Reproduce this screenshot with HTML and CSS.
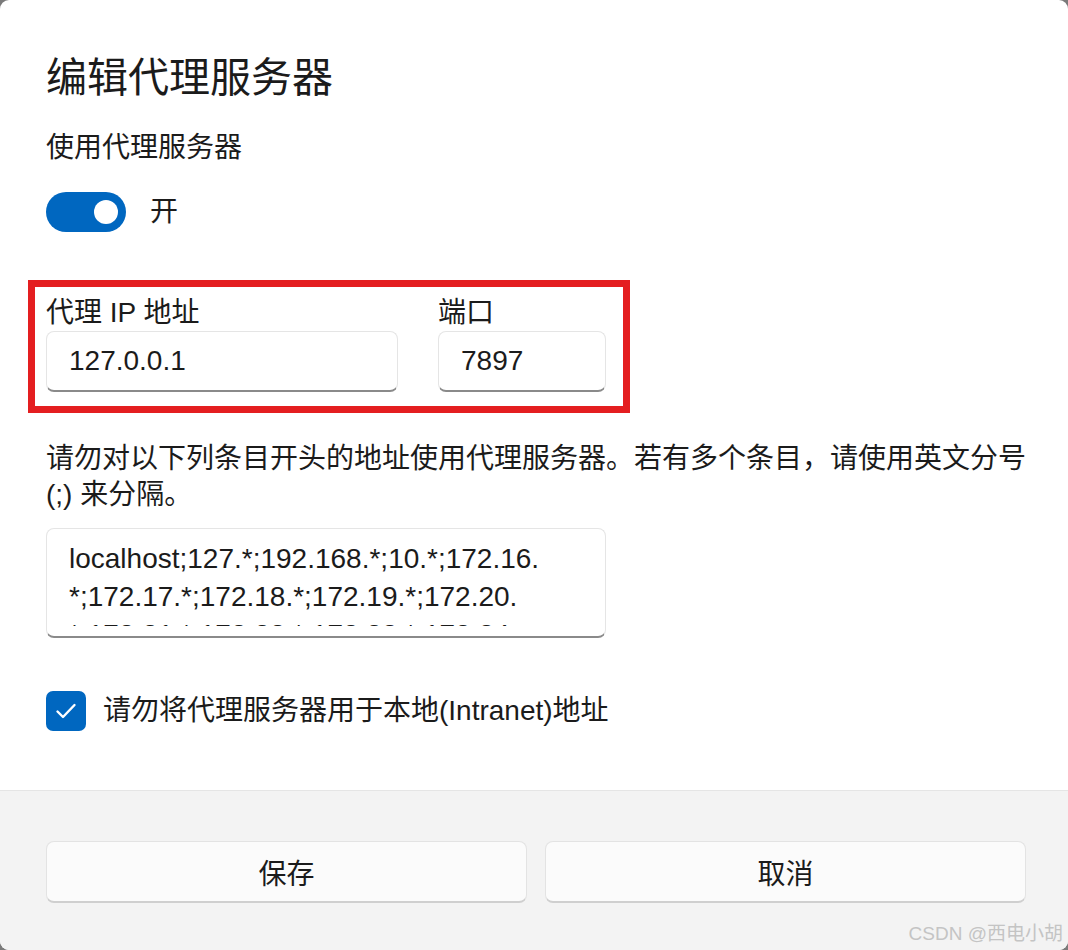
FILE: index.html
```html
<!DOCTYPE html>
<html lang="zh-CN">
<head>
    <meta charset="UTF-8">
    <meta name="viewport" content="width=device-width, initial-scale=1.0">
    <title>编辑代理服务器</title>
    <link rel="stylesheet" href="styles.css">
</head>
<body>
    <div class="dialog">
        <div class="content">
            <h1 class="title">编辑代理服务器</h1>
            <div class="subtitle">使用代理服务器</div>
            <div class="toggle-row">
                <div class="toggle"><div class="knob"></div></div>
                <span>开</span>
            </div>

            <div class="mark">
                <div class="field ip">
                    <div class="label">代理 IP 地址</div>
                    <div class="input">127.0.0.1</div>
                </div>
                <div class="field port">
                    <div class="label">端口</div>
                    <div class="input">7897</div>
                </div>
            </div>

            <p class="desc">请勿对以下列条目开头的地址使用代理服务器。若有多个条目，请使用英文分号<br>(;) 来分隔。</p>

            <div class="textarea">
                <div class="lines">
                    localhost;127.*;192.168.*;10.*;172.16.<br>
                    *;172.17.*;172.18.*;172.19.*;172.20.<br>
                    *;172.21.*;172.22.*;172.23.*;172.24.
                </div>
            </div>

            <div class="check-row">
                <div class="checkbox">
                    <svg width="40" height="40" viewBox="0 0 40 40">
                        <path d="M11.5 20.5 L17 26 L28.5 14" fill="none" stroke="#fff" stroke-width="2.4" stroke-linecap="round" stroke-linejoin="round"/>
                    </svg>
                </div>
                <span>请勿将代理服务器用于本地(Intranet)地址</span>
            </div>
        </div>

        <div class="footer">
            <button class="btn">保存</button>
            <button class="btn">取消</button>
        </div>

        <div class="watermark">CSDN @西电小胡</div>
    </div>
</body>
</html>
```
FILE: styles.css
```css
body {
    margin: 0;
    background: #7a7a7a;
    font-family: "Liberation Sans", "Noto Sans CJK SC", sans-serif;
    color: #1b1b1b;
}

.dialog {
    position: relative;
    height: 950px;
    background: #fff;
    border-radius: 9px;
    overflow: hidden;
    display: flex;
    flex-direction: column;
}

.content {
    padding: 52px 42px 0 46px;
    font-size: 28px;
    line-height: 36px;
    height: 790px;
    box-sizing: border-box;
    flex-shrink: 0;
}

.title {
    margin: 0;
    font-size: 41px;
    line-height: 52px;
    font-weight: normal;
}

.subtitle {
    margin-top: 26px;
}

.toggle-row {
    margin-top: 26px;
    display: flex;
    align-items: center;
    gap: 24px;
}

.toggle {
    width: 80px;
    height: 40px;
    border-radius: 20px;
    background: #0067c0;
    display: flex;
    align-items: center;
    justify-content: flex-end;
    padding-right: 8px;
    box-sizing: border-box;
}

.knob {
    width: 24px;
    height: 24px;
    border-radius: 50%;
    background: #fff;
}

.mark {
    margin: 48px 0 0 -18px;
    width: 602px;
    box-sizing: border-box;
    border: 7px solid #e41e20;
    padding: 8px 17px 14px 11px;
    display: flex;
    gap: 40px;
}

.ip { width: 352px; }
.port { width: 168px; }

.input {
    height: 61px;
    box-sizing: border-box;
    border: 1px solid #e5e5e5;
    border-bottom: 2px solid #8a8a8a;
    border-radius: 8px;
    padding-left: 22px;
    display: flex;
    align-items: center;
    background: #fff;
}

.desc {
    margin: 28px 0 0;
    white-space: nowrap;
}

.textarea {
    margin-top: 15px;
    width: 560px;
    height: 110px;
    box-sizing: border-box;
    border: 1px solid #e5e5e5;
    border-bottom: 2px solid #8a8a8a;
    border-radius: 8px;
    padding: 11px 22px 0;
}

.lines {
    height: 86px;
    overflow: hidden;
    line-height: 38px;
    white-space: nowrap;
}

.check-row {
    margin-top: 53px;
    display: flex;
    align-items: center;
    gap: 17px;
}

.checkbox {
    width: 40px;
    height: 40px;
    border-radius: 7px;
    background: #0067c0;
}

.checkbox svg { display: block; }

.footer {
    flex: 1;
    border-top: 1px solid #e5e5e5;
    background: #f3f3f3;
    padding: 50px 42px 0 46px;
    display: grid;
    grid-template-columns: 1fr 1fr;
    gap: 18px;
    align-content: start;
}

.btn {
    height: 62px;
    font: inherit;
    font-size: 28px;
    color: #1b1b1b;
    background: #fbfbfb;
    border: 1px solid #e3e3e3;
    border-bottom: 2px solid #cfcfcf;
    border-radius: 8px;
}

.watermark {
    position: absolute;
    right: 5px;
    bottom: 5px;
    font-size: 19px;
    color: #c4c4c4;
    font-family: "Liberation Sans", "Noto Sans CJK SC", sans-serif;
}
```
